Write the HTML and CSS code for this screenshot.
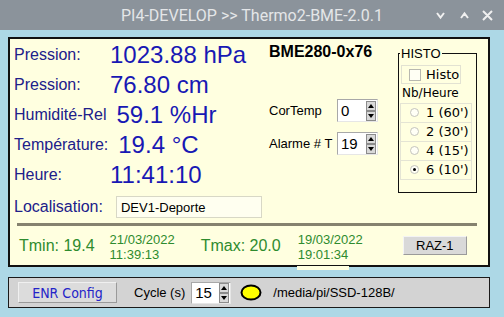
FILE: index.html
```html
<!DOCTYPE html>
<html lang="fr">
<head>
    <meta charset="UTF-8">
    <meta name="viewport" content="width=device-width, initial-scale=1.0">
    <title>Thermo2-BME-2.0.1</title>
    <link rel="stylesheet" href="styles.css">
</head>
<body>

    <div class="titlebar">
        <span class="title">PI4-DEVELOP &gt;&gt; Thermo2-BME-2.0.1</span>
        <svg class="controls" width="64" height="30" viewBox="0 0 64 30">
            <path d="M3 13l3.5 4.5L10 13M27 18l3.5-4.5L34 18M49 11l9 9M58 11l-9 9" stroke="#f0f0f0" stroke-width="2" fill="none"/>
        </svg>
    </div>

    <div class="window">
        <div class="main">
            <div class="top">
                <div class="readings">
                    <div class="row"><span class="lbl">Pression:</span><span class="val">1023.88 hPa</span></div>
                    <div class="row"><span class="lbl">Pression:</span><span class="val">76.80 cm</span></div>
                    <div class="row"><span class="lbl">Humidité-Rel</span><span class="val">59.1 %Hr</span></div>
                    <div class="row"><span class="lbl">Température:</span><span class="val">19.4 °C</span></div>
                    <div class="row"><span class="lbl">Heure:</span><span class="val">11:41:10</span></div>
                    <div class="row loc"><span class="lbl">Localisation:</span><span class="entry">DEV1-Deporte</span></div>
                </div>

                <div class="sensor">
                    <div class="sensor-name">BME280-0x76</div>
                    <div class="setting">
                        <span class="setting-lbl">CorTemp</span>
                        <div class="spin">
                            <span>0</span>
                            <svg class="arrows" width="10" height="20" viewBox="0 0 10 20"><rect x="0.5" y="0.5" width="9" height="9" fill="#d9d9d9" stroke="#8c8c8c"/><rect x="0.5" y="10.5" width="9" height="9" fill="#d9d9d9" stroke="#8c8c8c"/><path d="M2 7h6L5 3zM2 13h6l-3 4z" fill="#000"/></svg>
                        </div>
                    </div>
                    <div class="setting">
                        <span class="setting-lbl">Alarme # T</span>
                        <div class="spin">
                            <span>19</span>
                            <svg class="arrows" width="10" height="20" viewBox="0 0 10 20"><rect x="0.5" y="0.5" width="9" height="9" fill="#d9d9d9" stroke="#8c8c8c"/><rect x="0.5" y="10.5" width="9" height="9" fill="#d9d9d9" stroke="#8c8c8c"/><path d="M2 7h6L5 3zM2 13h6l-3 4z" fill="#000"/></svg>
                        </div>
                    </div>
                </div>

                <fieldset class="histo">
                    <legend>HISTO</legend>
                    <div class="check"><span class="box"></span>Histo</div>
                    <div class="nb">Nb/Heure</div>
                    <div class="radio"><span class="circle"></span>1 (60')</div>
                    <div class="radio"><span class="circle"></span>2 (30')</div>
                    <div class="radio"><span class="circle"></span>4 (15')</div>
                    <div class="radio"><span class="circle on"></span>6 (10')</div>
                </fieldset>
            </div>

            <div class="sep"></div>

            <div class="stats">
                <span class="tval">Tmin: 19.4</span>
                <span class="date d1">21/03/2022<br>11:39:13</span>
                <span class="tval tmax">Tmax: 20.0</span>
                <span class="date d2">19/03/2022<br>19:01:34</span>
                <button class="raz">RAZ-1</button>
            </div>
        </div>

        <div class="toolbar">
            <button class="enr">ENR Config</button>
            <span class="cycle">Cycle (s)</span>
            <div class="spin small">
                <span>15</span>
                <svg class="arrows" width="10" height="20" viewBox="0 0 10 20"><rect x="0.5" y="0.5" width="9" height="9" fill="#d9d9d9" stroke="#8c8c8c"/><rect x="0.5" y="10.5" width="9" height="9" fill="#d9d9d9" stroke="#8c8c8c"/><path d="M2 7h6L5 3zM2 13h6l-3 4z" fill="#000"/></svg>
            </div>
            <svg class="led" width="22" height="17" viewBox="0 0 22 17"><ellipse cx="11" cy="8.5" rx="9.5" ry="7" fill="#ffff00" stroke="#000" stroke-width="2"/></svg>
            <span class="path">/media/pi/SSD-128B/</span>
        </div>
    </div>

</body>
</html>
```

FILE: styles.css
```css
body {
    margin: 0;
    width: 504px;
    height: 317px;
    overflow: hidden;
    background-color: #add8e6;
    font-family: "Liberation Sans", Arial, sans-serif;
}
.titlebar {
    display: grid;
    grid-template-columns: 1fr auto 1fr;
    align-items: center;
    height: 30px;
    background-color: #8b939b;
}
.title {
    grid-column: 2;
    font-family: Roboto, "Liberation Sans", sans-serif;
    font-size: 16px;
    color: #e4e6e8;
}
.controls {
    grid-column: 3;
    justify-self: end;
    margin-right: 6px;
}
.window {
    padding: 7px 14px 0 8px;
}
.main {
    box-sizing: border-box;
    height: 230px;
    border: 2px solid #111;
    background-color: #ffffe0;
}
.top {
    display: flex;
    align-items: flex-start;
    height: 184px;
}
.readings {
    width: 259px;
    box-sizing: border-box;
    padding: 1px 0 0 4px;
}
.row {
    display: flex;
    align-items: center;
    height: 30px;
}
.lbl {
    min-width: 86px;
    margin-right: 10px;
    font-size: 16px;
    color: #20208a;
}
.val {
    font-size: 24px;
    color: #1818b4;
}
.loc {
    margin-top: 2px;
}
.loc .lbl {
    margin-right: 13px;
}
.entry {
    box-sizing: border-box;
    width: 146px;
    height: 22px;
    padding: 3px 4px;
    border: 1px solid #d8d8c6;
    background-color: #fffff0;
    font-size: 13px;
    color: #000;
}
.sensor {
    width: 129px;
    padding-top: 4px;
}
.sensor-name {
    font-size: 16px;
    font-weight: bold;
    line-height: 18px;
    margin-bottom: 38px;
}
.setting {
    display: flex;
    align-items: center;
    margin-bottom: 10px;
}
.setting-lbl {
    width: 68px;
    font-size: 13px;
}
.spin {
    display: flex;
    align-items: center;
    justify-content: space-between;
    box-sizing: border-box;
    width: 41px;
    height: 23px;
    padding: 0 1px 0 3px;
    border: 1px solid;
    border-color: #a8a8a8 #e6e6e6 #e6e6e6 #a8a8a8;
    background-color: #fff;
    font-size: 15px;
}
.histo {
    box-sizing: border-box;
    width: 79px;
    margin: 7px 0 0;
    padding: 0 4px 12px 1px;
    border: 1px solid #111;
    font-family: "DejaVu Sans", sans-serif;
}
.histo legend {
    padding: 0 1px;
    font-family: "Liberation Sans", sans-serif;
    font-size: 13px;
    line-height: 15px;
}
.check {
    display: inline-flex;
    align-items: center;
    box-sizing: border-box;
    width: 60px;
    height: 19px;
    margin: 4px 0 0 1px;
    padding-left: 7px;
    border: 1px solid #e2e2d2;
    font-size: 13px;
}
.box {
    width: 10px;
    height: 10px;
    margin-right: 5px;
    border: 1px solid #b8b8b0;
    background-color: #fffff4;
}
.nb {
    height: 16px;
    margin: 0 0 2px 2px;
    font-size: 12px;
    line-height: 16px;
}
.radio {
    display: flex;
    align-items: center;
    box-sizing: border-box;
    height: 20px;
    padding-left: 9px;
    border: 1px solid #e4e4d4;
    font-size: 13px;
}
.radio + .radio {
    margin-top: -1px;
}
.circle {
    display: flex;
    align-items: center;
    justify-content: center;
    box-sizing: border-box;
    width: 9px;
    height: 9px;
    margin-right: 7px;
    border: 1px solid #c4c4bc;
    border-radius: 50%;
    background-color: #fffff6;
}
.circle.on::after {
    content: "";
    width: 3px;
    height: 3px;
    border-radius: 50%;
    background-color: #000;
}
.sep {
    height: 3px;
    margin: 0 11px 0 7px;
    background-color: #85826f;
}
.stats {
    display: flex;
    align-items: center;
    height: 39px;
    padding-left: 9px;
    color: #2e8b2e;
}
.tval {
    font-size: 16px;
}
.date {
    font-size: 13px;
    line-height: 15px;
    margin-top: 3px;
}
.d1 {
    margin-left: 15px;
}
.tmax {
    margin-left: 26px;
}
.d2 {
    position: relative;
    margin-left: 17px;
}
.d2::after {
    content: "";
    position: absolute;
    left: -1px;
    top: 34px;
    width: 52px;
    height: 4px;
    background-color: #ffffe0;
}
.raz {
    box-sizing: border-box;
    width: 64px;
    height: 19px;
    margin-left: 40px;
    padding: 0;
    border: 1px solid;
    border-color: #f4f4f4 #9a9a9a #9a9a9a #f4f4f4;
    background-color: #d9d9d9;
    font-family: "Liberation Sans", sans-serif;
    font-size: 13px;
    color: #000;
}
.toolbar {
    display: flex;
    align-items: center;
    box-sizing: border-box;
    height: 31px;
    margin-top: 10px;
    padding-left: 9px;
    border: 1px solid #1a1a1a;
    background-color: #d3d3d3;
    font-size: 13px;
}
.enr {
    box-sizing: border-box;
    width: 99px;
    height: 21px;
    padding: 0;
    border: 1px solid;
    border-color: #f0f0f0 #9a9a9a #9a9a9a #f0f0f0;
    background-color: #dcdcdc;
    font-family: "DejaVu Sans Condensed", "DejaVu Sans", sans-serif;
    font-size: 14px;
    color: #2424c8;
}
.cycle {
    margin-left: 17px;
}
.spin.small {
    width: 40px;
    height: 22px;
    margin-left: 6px;
}
.led {
    margin-left: 9px;
}
.path {
    margin-left: 11px;
}
```
